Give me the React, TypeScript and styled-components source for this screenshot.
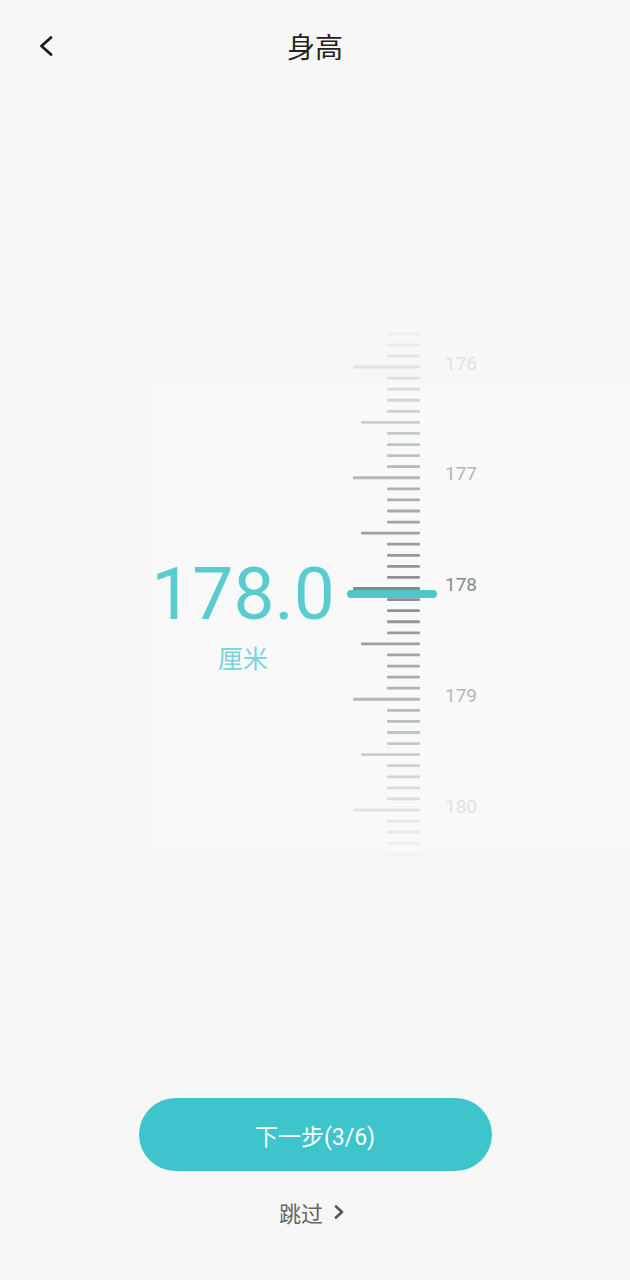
import React from 'react';
import styled, { createGlobalStyle } from 'styled-components';

const GlobalStyle = createGlobalStyle`
  html, body {
    margin: 0;
    padding: 0;
    background: #f7f7f7;
  }
  body {
    font-family: Roboto, "Noto Sans CJK SC", sans-serif;
  }
`;

const Page = styled.div`
  width: 630px;
  height: 1280px;
  display: flex;
  flex-direction: column;
  background: #f7f7f7;
  overflow: hidden;
`;

const Header = styled.div`
  height: 92px;
  display: grid;
  grid-template-columns: 92px 1fr 92px;
  align-items: center;
`;

const BackButton = styled.button`
  border: none;
  background: none;
  padding: 0 0 0 36px;
  height: 92px;
  display: flex;
  align-items: center;
  cursor: pointer;
`;

const Title = styled.h1`
  margin: 0;
  text-align: center;
  font-size: 28px;
  font-weight: 400;
  color: #222;
  font-family: "Noto Sans CJK SC", sans-serif;
`;

const Stage = styled.div`
  margin: 228px 0 0 152px;
  display: flex;
  align-items: center;
  gap: 6px;
  background: linear-gradient(
    to bottom,
    transparent 63px,
    #f9f9f9 63px,
    #f9f9f9 530px,
    transparent 530px
  );
`;

const Readout = styled.div`
  width: 182px;
  display: flex;
  flex-direction: column;
  align-items: center;
  margin-top: 48px;
`;

const Value = styled.div`
  font-family: Roboto, sans-serif;
  font-size: 73px;
  line-height: 60px;
  white-space: nowrap;
  color: #5acbd1;
`;

const Unit = styled.div`
  margin-top: 16px;
  font-family: "Noto Sans CJK SC", sans-serif;
  font-size: 25px;
  line-height: 34px;
  color: #7ad3d7;
`;

const Footer = styled.div`
  margin-top: 228px;
  display: flex;
  flex-direction: column;
  align-items: center;
`;

const NextButton = styled.button`
  width: 353px;
  height: 73px;
  border: none;
  border-radius: 37px;
  background: #3ec4cb;
  color: #fff;
  font-family: Roboto, "Noto Sans CJK SC", sans-serif;
  font-size: 23px;
  cursor: pointer;
`;

const SkipLink = styled.div`
  margin-top: 26px;
  height: 30px;
  display: flex;
  align-items: center;
  gap: 10px;
  margin-right: 6px;
  font-family: "Noto Sans CJK SC", sans-serif;
  font-size: 22px;
  color: #666;
`;

const STEP = 110.75;
const CENTER_Y = 269;

const fade = (y: number) => {
  const t = Math.min(1, Math.abs(y - CENTER_Y) / 280);
  const c = Math.round(0x88 + t * (0xf7 - 0x88));
  return `rgb(${c},${c + 3},${c + 3})`;
};

const Ruler: React.FC = () => {
  const ticks = [];
  for (let i = 0; i < 50; i += 1) {
    const tenth = 1756 + i;
    const y = 47 + ((tenth - 1760) / 10) * STEP;
    const whole = tenth % 10 === 0;
    const half = tenth % 5 === 0 && !whole;
    const x = whole ? 13 : half ? 21 : 47;
    ticks.push(
      <rect key={tenth} x={x} y={y - 1.4} width={80 - x} height={2.8} rx={1} fill={fade(y)} />,
    );
    if (whole) {
      ticks.push(
        <text
          key={`l${tenth}`}
          x={105}
          y={y - 4}
          dominantBaseline="central"
          fontFamily="Roboto, sans-serif"
          fontSize={19}
          fill={fade(y)}
        >
          {tenth / 10}
        </text>,
      );
    }
  }
  return (
    <svg width="160" height="550" viewBox="0 0 160 550">
      {ticks}
      <rect x={7} y={270} width={90} height={8} rx={4} fill="#4fc6cd" />
    </svg>
  );
};

const App: React.FC = () => (
  <Page>
    <GlobalStyle />
    <Header>
      <BackButton aria-label="back">
        <svg width="20" height="24" viewBox="0 0 20 24">
          <path d="M15 3.5 L5.5 12 L15 20.5" fill="none" stroke="#1a1a1a" strokeWidth="2.8" strokeLinecap="round" strokeLinejoin="round" />
        </svg>
      </BackButton>
      <Title>身高</Title>
      <div />
    </Header>
    <Stage>
      <Readout>
        <Value>178.0</Value>
        <Unit>厘米</Unit>
      </Readout>
      <Ruler />
    </Stage>
    <Footer>
      <NextButton>下一步(3/6)</NextButton>
      <SkipLink>
        跳过
        <svg width="12" height="16" viewBox="0 0 12 16">
          <path d="M3 2.5 L9 8 L3 13.5" fill="none" stroke="#555" strokeWidth="2.6" strokeLinecap="round" strokeLinejoin="round" />
        </svg>
      </SkipLink>
    </Footer>
  </Page>
);

export default App;
